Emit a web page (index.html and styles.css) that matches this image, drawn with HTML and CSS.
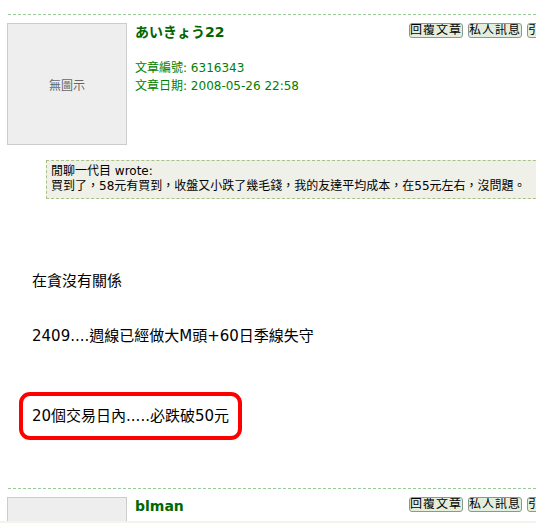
FILE: index.html
```html
<!DOCTYPE html>
<html lang="zh-Hant">
<head>
<meta charset="UTF-8">
<title>討論區</title>
<link rel="stylesheet" href="styles.css">
</head>
<body>
  <div class="page">

    <div class="post">
      <div class="post__head">
        <div class="avatar">無圖示</div>
        <div class="post__info">
          <div class="post__user">あいきょう22</div>
          <div class="post__meta">文章編號: 6316343</div>
          <div class="post__meta">文章日期: 2008-05-26 22:58</div>
        </div>
        <div class="post__tools">
          <span class="tool-btn">回覆文章</span>
          <span class="tool-btn">私人訊息</span>
          <span class="tool-btn">引用回覆</span>
        </div>
      </div>

      <div class="quote">
        閒聊一代目 wrote:<br>
        買到了，58元有買到，收盤又小跌了幾毛錢，我的友達平均成本，在55元左右，沒問題。
      </div>

      <div class="post__body">
        <p class="line line--first">在貪沒有關係</p>
        <p class="line">2409....週線已經做大M頭+60日季線失守</p>
        <p class="line line--mark"><span class="mark">20個交易日內.....必跌破50元</span></p>
      </div>
    </div>

    <div class="post">
      <div class="post__head">
        <div class="avatar"></div>
        <div class="post__info">
          <div class="post__user">blman</div>
        </div>
        <div class="post__tools">
          <span class="tool-btn">回覆文章</span>
          <span class="tool-btn">私人訊息</span>
          <span class="tool-btn">引用回覆</span>
        </div>
      </div>
    </div>

  </div>
  <div class="bottom-strip"></div>
</body>
</html>
```

FILE: styles.css
```css
html, body {
  margin: 0;
  padding: 0;
  overflow: hidden;
  background: #fff;
}

body {
  font-family: "DejaVu Sans", "Noto Sans CJK TC", sans-serif;
  color: #000;
}

.page {
  margin-left: 8px;
  width: 573px;
  padding-top: 14px;
}

.post {
  border-top: 1px dashed #99cc99;
}

.post__head {
  display: flex;
  align-items: flex-start;
  padding-top: 8px;
}

.avatar {
  width: 118px;
  height: 120px;
  margin-left: -1px;
  background-color: #eeeeee;
  border: 1px solid #cccccc;
  display: flex;
  align-items: center;
  justify-content: center;
  font-size: 12px;
  color: #666;
}

.post__info {
  margin-left: 8px;
}

.post__user {
  font-family: "DejaVu Sans", "Noto Sans CJK JP", sans-serif;
  font-size: 14px;
  font-weight: bold;
  line-height: 18px;
  color: #006600;
}

.post__meta {
  font-size: 12px;
  line-height: 18px;
  color: #008000;
}

.post__user + .post__meta {
  margin-top: 18px;
}

.post__tools {
  margin-left: auto;
  display: flex;
  gap: 5px;
}

.tool-btn {
  display: block;
  width: 52px;
  height: 13px;
  line-height: 13px;
  font-size: 12px;
  letter-spacing: 1px;
  text-align: center;
  background-color: #e4eedc;
  border: 1px solid #8a9a8a;
  border-radius: 3px;
  color: #000;
  white-space: nowrap;
  overflow: hidden;
}

.quote {
  margin: 15px 0 0 38px;
  padding: 3px 4px 4px;
  font-size: 12px;
  line-height: 15px;
  background-color: #eff1e8;
  border: 1px dashed #a8bf8a;
}

.post__body {
  padding-bottom: 48px;
}

.line {
  margin: 35px 0 0 24px;
  font-size: 15px;
  line-height: 20px;
}

.line--first {
  margin-top: 72px;
}

.line--mark {
  margin: 46px 0 0 11px;
}

.mark {
  display: inline-block;
  padding: 10px 9px;
  border: 4px solid #ff0000;
  border-radius: 11px;
}

.bottom-strip {
  position: fixed;
  left: 0;
  right: 0;
  bottom: 0;
  height: 2px;
  background-color: #f4f4ea;
}
```
